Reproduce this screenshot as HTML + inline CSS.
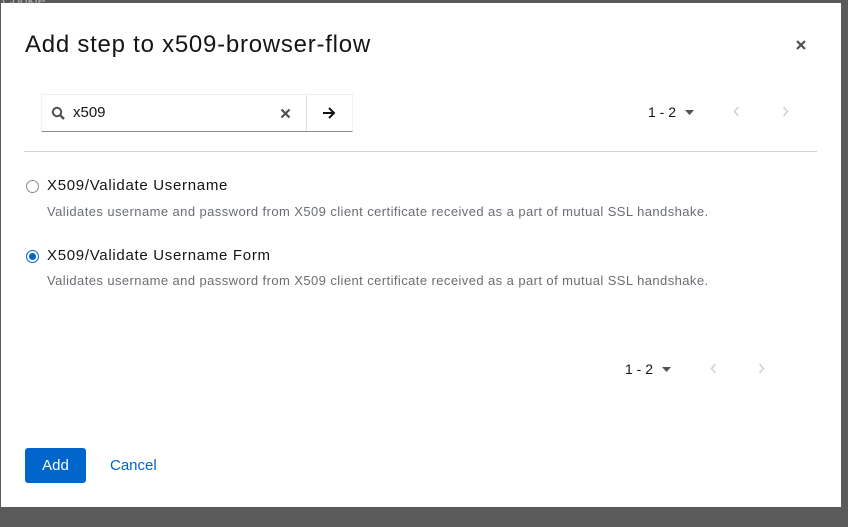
<!DOCTYPE html>
<html><head><style>
body{margin:0;width:848px;height:527px;background:#5a5a5a;font-family:"Liberation Sans",sans-serif;position:relative;overflow:hidden}
.m{position:absolute;left:1px;top:3px;width:840px;height:504px;background:#fff}
.a{position:absolute;white-space:nowrap}
h1{position:absolute;left:24px;top:28px;margin:0;font-weight:normal;font-size:24px;letter-spacing:0.75px;color:#151515}
.search{position:absolute;left:40px;top:91px;width:310px;height:36px;border:1px solid #f0f0f0;border-bottom:1px solid #8a8d90}
.sep{position:absolute;left:264px;top:0;width:1px;height:36px;background:#e0e0e0}
.lbl{font-size:15px;letter-spacing:0.7px;color:#151515}
.desc{font-size:13px;letter-spacing:0.42px;color:#6a6e73}
.radio{position:absolute;width:11px;height:11px;border:1px solid #8a8d90;border-radius:50%}
.pg{font-size:14px;color:#151515}
</style></head><body>
<div class="a" style="left:2px;top:-8px;color:#aaa;font-size:14px">Cookie</div>
<div class="m">
<h1>Add step to x509-browser-flow</h1>
<svg class="a" style="left:794px;top:36px" width="12" height="12" viewBox="0 0 12 12"><path d="M2 2L10 10M10 2L2 10" stroke="#4f5255" stroke-width="2.2"/></svg>
<div class="search">
<svg class="a" style="left:9px;top:11px" width="14" height="14" viewBox="0 0 14 14"><circle cx="6" cy="6" r="4.2" fill="none" stroke="#4f5255" stroke-width="2"/><path d="M9 9L13 13" stroke="#4f5255" stroke-width="2.4"/></svg>
<div class="a" style="left:31px;top:9px;font-size:15px;color:#151515">x509</div>
<svg class="a" style="left:238px;top:13px" width="11" height="11" viewBox="0 0 11 11"><path d="M1.5 1.5L9.5 9.5M9.5 1.5L1.5 9.5" stroke="#4f5255" stroke-width="2.2"/></svg>
<div class="sep"></div>
<svg class="a" style="left:280px;top:11px" width="14" height="14" viewBox="0 0 14 14"><path d="M1 7H12M7 2L12 7L7 12" fill="none" stroke="#151515" stroke-width="2"/></svg>
</div>
<div class="a pg" style="left:647px;top:101px">1 - 2</div>
<svg class="a" style="left:684px;top:107px" width="9" height="5"><path d="M0 0H9L4.5 5Z" fill="#4f5255"/></svg>
<svg class="a" style="left:732px;top:103px" width="7" height="11"><path d="M5.5 1L1.5 5.5L5.5 10" fill="none" stroke="#d2d2d2" stroke-width="1.6"/></svg>
<svg class="a" style="left:781px;top:103px" width="7" height="11"><path d="M1.5 1L5.5 5.5L1.5 10" fill="none" stroke="#d2d2d2" stroke-width="1.6"/></svg>
<div class="a" style="left:23px;top:148px;width:793px;height:1px;background:#d2d2d2"></div>
<div class="radio" style="left:25px;top:177px"></div>
<div class="a lbl" style="left:46px;top:174px">X509/Validate Username</div>
<div class="a desc" style="left:46px;top:201px">Validates username and password from X509 client certificate received as a part of mutual SSL handshake.</div>
<div class="radio" style="left:25px;top:247px;border-color:#06c"><div style="position:absolute;left:2px;top:2px;width:7px;height:7px;border-radius:50%;background:#06c"></div></div>
<div class="a lbl" style="left:46px;top:244px">X509/Validate Username Form</div>
<div class="a desc" style="left:46px;top:270px">Validates username and password from X509 client certificate received as a part of mutual SSL handshake.</div>
<div class="a pg" style="left:624px;top:358px">1 - 2</div>
<svg class="a" style="left:661px;top:364px" width="9" height="5"><path d="M0 0H9L4.5 5Z" fill="#4f5255"/></svg>
<svg class="a" style="left:709px;top:360px" width="7" height="11"><path d="M5.5 1L1.5 5.5L5.5 10" fill="none" stroke="#d2d2d2" stroke-width="1.6"/></svg>
<svg class="a" style="left:757px;top:360px" width="7" height="11"><path d="M1.5 1L5.5 5.5L1.5 10" fill="none" stroke="#d2d2d2" stroke-width="1.6"/></svg>
<div class="a" style="left:24px;top:445px;width:61px;height:35px;background:#06c;border-radius:3px;color:#fff;font-size:15px;text-align:center;line-height:35px">Add</div>
<div class="a" style="left:109px;top:454px;color:#06c;font-size:15px">Cancel</div>
</div>
</body></html>
